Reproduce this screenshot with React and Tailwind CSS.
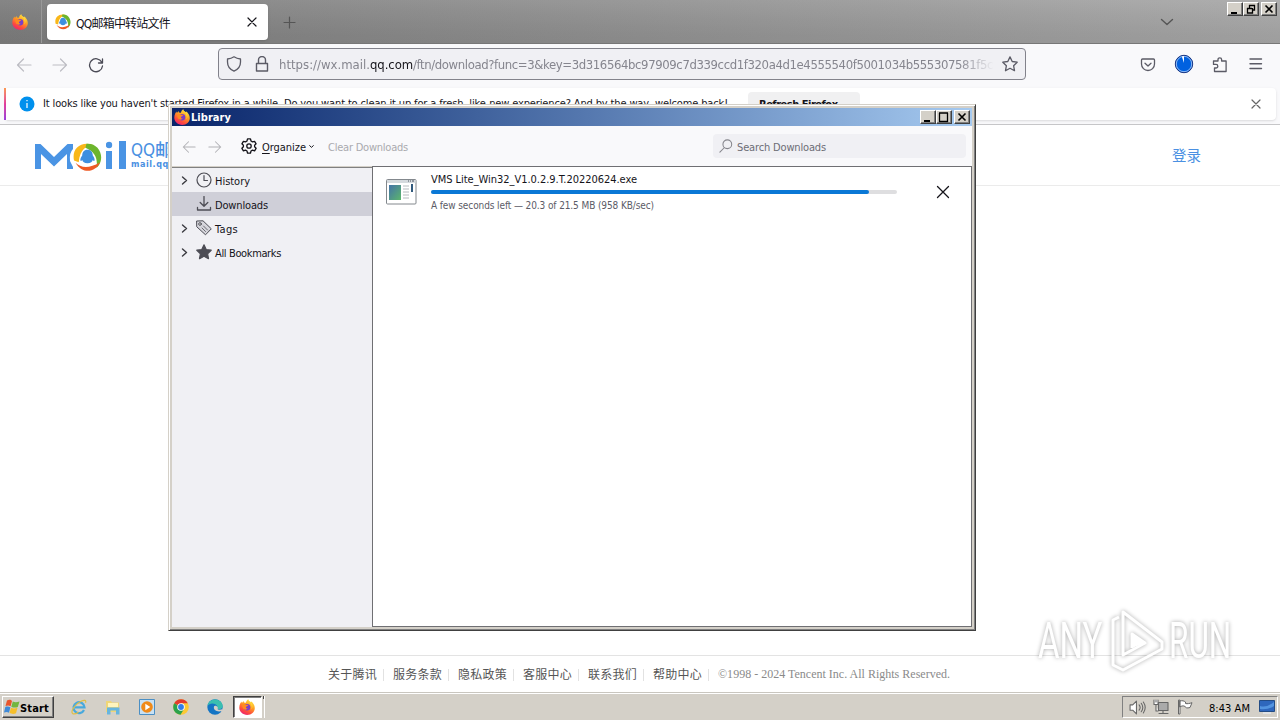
import { useLayoutEffect, useRef } from "react";

const UI = "font-['DejaVu_Sans_Condensed','Noto_Sans_CJK_SC',sans-serif]";

/* Text run whose tracking is adjusted so that it fills a given width. */
function Fit({ w, className = "", children }) {
  const ref = useRef(null);
  useLayoutEffect(() => {
    const el = ref.current;
    el.style.letterSpacing = "0px";
    const n = el.textContent.length;
    el.style.letterSpacing = `${(w - el.getBoundingClientRect().width) / n}px`;
  }, [w]);
  return (
    <span ref={ref} className={`inline-block shrink-0 whitespace-pre ${className}`}>
      {children}
    </span>
  );
}

function Icon({ className = "size-4", children, box = "0 0 16 16", sw = 1.2 }) {
  return (
    <svg viewBox={box} className={`shrink-0 ${className}`} fill="none" stroke="currentColor" strokeWidth={sw} strokeLinecap="round" strokeLinejoin="round">
      {children}
    </svg>
  );
}

function Firefox({ className }) {
  return (
    <svg viewBox="0 0 16 16" className={`shrink-0 ${className}`}>
      <defs>
        <linearGradient id="ffx" x1="0.8" y1="0" x2="0.25" y2="1">
          <stop offset="0" stopColor="#fff04a" />
          <stop offset="0.4" stopColor="#ffa022" />
          <stop offset="0.75" stopColor="#ff4a3d" />
          <stop offset="1" stopColor="#e8207a" />
        </linearGradient>
      </defs>
      <path fill="url(#ffx)" d="M1.2 4.5 2.4 2.4l.5 1.5L4.6 2l.3 1.6 2 .1C7.300 1.900 8.200.8 9.400.2c.1 1.500 1.200 2.200 2.300 3.200.4-.1.3-.8.2-1.200 2.300 1.500 3.900 4 3.900 6.700 0 4-3.300 7-7.600 7S.3 12.800.3 8.800c0-1.600.300-2.900.9-4.300z" />
      <circle cx="8" cy="8.200" r="3.300" fill="#7a3fc9" />
      <path fill="#ff8a20" d="M3 5.500c1.500-1 3-.7 4.300.300l1.900.2c-.3 1-1.500 1.300-2.200 1.900-.4.800.5 1.700 1.600 1.600-.6 1-2 1.500-3 1C4 10 3.200 8.200 3 5.500z" />
      <path fill="#ffd83a" d="M9.600 1.500c.2 1.900 3.200 3 3.200 6.300 0 1.100-.3 2-.8 2.800 2.500-2.400 1.500-6-.5-7.700-.7-.6-1.600-.9-1.900-1.400z" />
    </svg>
  );
}

function MailMark({ className }) {
  return (
    <svg viewBox="0 0 28 28" className={`shrink-0 ${className}`} fill="none">
      <path d="M1 17C-1 8 4 1 13.500.8c3 0 5 .7 6.500 1.700C13 2.500 7 5.500 5.500 18.500z" fill="#f9b719" />
      <path d="M13 .8C23 0 29 9 26.700 17.500c-.8 3-2 4.500-4 6.500C24 16 22 8.500 12 4.500z" fill="#6cb52d" />
      <path d="M26 18.500C22 28.500 9 30.500 2.500 19c5 5 13 6 23.500-.5z" fill="#ee5a24" />
      <path d="M14 6.500c3.600 0 5 2.500 5.100 5.500 1.200 1.400 2.100 3.600 1.700 5-.3.700-1.200-.1-1.700-.7-.4 1.800-2 3.200-5.100 3.200s-4.700-1.400-5.100-3.200c-.5.600-1.400 1.400-1.700.7-.4-1.400.5-3.600 1.700-5 .1-3 1.500-5.500 5.100-5.500z" fill="#3d8fe0" />
    </svg>
  );
}

const Back = ({ className }) => <Icon className={className}><path d="M15 8H1.500M7.500 2 1.500 8l6 6" /></Icon>;
const Forward = ({ className }) => <Icon className={className}><path d="M1 8h13.500M8.500 2l6 6-6 6" /></Icon>;
const Chevron = () => <Icon className="size-[9px]" box="0 0 9 9" sw={1.400}><path d="M2.500 1 6.500 4.500l-4 3.500" /></Icon>;

const BEVEL = "border border-t-white border-l-white border-b-[#404040] border-r-[#404040] bg-[#d4d0c8] shadow-[inset_-1px_-1px_#808080]";

function CaptionButton({ kind, className = "" }) {
  return (
    <div className={`flex h-[14px] w-4 items-center justify-center text-black ${BEVEL} ${className}`}>
      <svg viewBox="0 0 12 11" className="h-[11px] w-3" fill="none" stroke="currentColor">
        {kind === "min" && <path d="M2 9h6" strokeWidth="2" />}
        {kind === "max" && <path d="M1 1h9M1.500 1v8.500h8V1" strokeWidth="1.300" />}
        {kind === "restore" && <path d="M4 1.500h6M4.500 1v3M9.500 1v5H7M2 4.500h5M2.500 4v5h5V4" strokeWidth="1.300" />}
        {kind === "close" && <path d="m2.500 1.500 7 7m0-7-7 7" strokeWidth="1.600" />}
      </svg>
    </div>
  );
}

function TitleBar() {
  return (
    <header className="flex h-11 shrink-0 border-b border-[#777] bg-linear-to-r from-[#7f7f7f] via-[#949494] to-[#aaaaaa]">
      <div className="flex w-full bg-linear-to-b from-white/5 to-black/7">
        <div className="flex w-[42px] items-center border-r border-[#999] pl-3"><Firefox className="size-4" /></div>
        <div className="mt-1 ml-[5px] flex h-9 w-[221px] items-center rounded bg-white pl-2 text-[#15141a] shadow-sm">
          <MailMark className="size-4" />
          <Fit w={94} className="mt-[3px] ml-[5px] text-[12px]">QQ邮箱中转站文件</Fit>
          <Icon className="ml-[77px] size-[10px]" box="0 0 10 10"><path d="m1 1 8 8m0-8L1 9" /></Icon>
        </div>
        <Icon className="mt-[16px] ml-[15px] size-[13px] text-[#555]" box="0 0 13 13"><path d="M6.500 1v11M1 6.500h11" /></Icon>
        <Icon className="mt-[15px] ml-auto size-[14px] text-[#555]" box="0 0 14 14" sw={1.400}><path d="m1.500 4.500 5.500 5 5.500-5" /></Icon>
        <div className="mt-0.5 mr-[3px] ml-[53px] flex">
          <CaptionButton kind="min" />
          <CaptionButton kind="restore" />
          <CaptionButton kind="close" className="ml-[2px]" />
        </div>
      </div>
    </header>
  );
}

function NavBar() {
  return (
    <nav className="flex h-11 shrink-0 items-center bg-[#f9f9fb] pb-[3px] text-[#5b5b66]">
      <div className="ml-4 flex gap-5 text-[#bdbdc3]"><Back /><Forward /></div>
      <Icon className="ml-5 size-4 text-[#4a4a55]" sw={1.300}><path d="M13.800 5.200A6.500 6.500 0 1 0 14.500 9M14.500 2v4H10.500" /></Icon>
      <div className="-mt-px ml-[114px] flex h-8 w-[808px] items-center rounded border border-[#82828b] bg-[#f0f0f4] pl-[7px]">
        <Icon className="size-4" sw={1.300}><path d="M8 .8c2 1.400 4 2 6.500 2.200v3c0 4-2.500 7.500-6.500 9.200C4 13.500 1.500 10 1.500 6V3C4 2.800 6 2.200 8 .8z" /></Icon>
        <Icon className="ml-3 size-4" sw={1.400}><path d="M2.500 7.500h11v7.500h-11zM4.500 7.500V4a3.500 3.500 0 0 1 7 0v3.500" /></Icon>
        <div className="mt-0.5 ml-[9px] flex w-[715px] overflow-hidden text-[13px] text-[#85858e] mask-r-from-95%">
          <Fit w={91}>https://wx.mail.</Fit>
          <Fit w={43} className="text-[#15141a]">qq.com</Fit>
          <Fit w={580}>/ftn/download?func=3&amp;key=3d316564bc97909c7d339ccd1f320a4d1e4555540f5001034b555307581f5c</Fit>
        </div>
        <Icon className="ml-2 size-4" sw={1.300}><path d="m8 .9 2.200 4.600 5 .7-3.600 3.500.9 5L8 12.300l-4.500 2.400.9-5L.8 6.200l5-.7z" /></Icon>
      </div>
      <Icon className="ml-[114px] size-4" sw={1.300}><path d="M2.500 2h11q1 0 1 1v4a6.500 6.500 0 0 1-13 0V3q0-1 1-1zM5 6.200l3 2.800 3-2.800" /></Icon>
      <svg viewBox="0 0 20 20" className="-mt-px ml-[18px] size-5">
        <circle cx="10" cy="10" r="8.700" fill="#0061e0" stroke="#15307c" strokeWidth="1" />
        <circle cx="10" cy="10" r="7.700" fill="none" stroke="#cfe2ff" strokeWidth=".7" />
        <path d="M10 9 7.800 2.500Q9 2 10 2z" fill="#fff" />
      </svg>
      <Icon className="ml-[18px] size-4" sw={1.300}><path d="M2.500 14.500V11H4a1.800 1.800 0 0 0 0-3.600H1.500V4H6V2.600a1.800 1.800 0 0 1 3.600 0V4h4.500v10.500z" /></Icon>
      <Icon className="-mt-px ml-5 size-4" sw={1.400}><path d="M2 3h11.500M2 7.800h11.500M2 12.500h11.500" /></Icon>
    </nav>
  );
}

function Notification() {
  return (
    <div className="flex h-[37px] shrink-0 border-b border-[#c6c6c8] bg-[#f9f9fb] px-1 pb-1">
      <div className="w-[2px] bg-linear-to-b from-[#ff9a50] via-[#e83fa0] to-[#9f3fe0]" />
      <div className="flex min-w-0 flex-1 rounded-r bg-white pl-[13px] shadow-sm">
        <svg viewBox="0 0 16 16" className="mt-2 size-4 shrink-0">
          <circle cx="8" cy="8" r="7.500" fill="#0090ed" />
          <path d="M8 4v1.300M8 7v5" stroke="#fff" strokeWidth="1.200" />
        </svg>
        <Fit w={685} className="mt-2 ml-2 text-[11px] leading-4 text-[#15141a]">It looks like you haven't started Firefox in a while. Do you want to clean it up for a fresh, like-new experience? And by the way, welcome back!</Fit>
        <div className="mt-1 ml-5 h-7 w-28 rounded bg-[#f0f0f1] pt-[5px] pl-[11px] text-[11px] leading-4 font-bold text-[#15141a]"><Fit w={88}>Refresh Firefox…</Fit></div>
        <Icon className="mt-[11px] mr-[15px] ml-auto size-[10px] text-[#666]" box="0 0 10 10"><path d="m1 1 8 8m0-8L1 9" /></Icon>
      </div>
    </div>
  );
}

function MailPage() {
  const links = ["关于腾讯", "服务条款", "隐私政策", "客服中心", "联系我们", "帮助中心"];
  return (
    <main className="flex min-h-0 flex-1 flex-col bg-white">
      <div className="flex h-[61px] shrink-0 items-center border-b border-[#ebebeb] pl-[35px] text-[#4a90e2]">
        <svg viewBox="0 0 38 26" preserveAspectRatio="none" className="mt-[2px] h-[26px] w-[38px]" fill="#4a94e4"><path d="M0 26V1h5.500L19 14 32.500 1H38v5q-4 4-3 12l3 6v2h-6V11L19 23.500 6 11v15z" /></svg>
        <MailMark className="mt-1 size-[29px]" />
        <svg viewBox="0 0 20 28" className="ml-[4px] h-7 w-5" fill="#4a94e4"><path d="M0 10h6v18H0zM13 0h7v28h-7z" /><circle cx="3" cy="4" r="3.200" /></svg>
        <div className="ml-[5px] flex flex-col">
          <span className="text-[17px] leading-[18px] font-medium whitespace-nowrap">QQ邮箱</span>
          <Fit w={64} className="text-[9px] leading-[10px] font-bold">mail.qq.com</Fit>
        </div>
        <span className="mt-[3px] mr-[79px] ml-auto text-[14.500px]">登录</span>
      </div>
      <footer className="mt-auto flex h-[37px] shrink-0 items-center border-t border-[#e3e3e3] pt-px pl-[328px] text-[12px] text-[#555]">
        {links.map((t) => (
          <div key={t} className="flex w-[65px] shrink-0 items-center">
            <Fit w={49}>{t}</Fit>
            <span className="ml-1.5 h-3 w-px bg-[#e2e2e2]" />
          </div>
        ))}
        <Fit w={232} className="-mt-px font-['Liberation_Serif',serif] text-[12px] text-[#8a8a8a]">©1998 - 2024 Tencent Inc. All Rights Reserved.</Fit>
      </footer>
    </main>
  );
}

function TreeRow({ label, w, icon, open, selected }) {
  return (
    <div className={`flex h-6 items-center pl-2 ${selected ? "bg-[#cfcfd8]" : ""}`}>
      <span className="mt-px w-[9px] text-[#3a3a40]">{open && <Chevron />}</span>
      <span className="ml-[7px] flex text-[#4d4d55]">{icon}</span>
      <Fit w={w} className="mt-[4px] ml-[3px] leading-4">{label}</Fit>
    </div>
  );
}

function LibraryWindow() {
  return (
    <section className="absolute top-[104px] left-[168px] flex h-[527px] w-[808px] flex-col border border-t-[#d4d0c8] border-r-[#404040] border-b-[#404040] border-l-[#d4d0c8] bg-[#d4d0c8] p-[2px] pb-[3px] text-[11px] text-[#15141a] shadow-[inset_1px_1px_#fff,inset_-1px_-1px_#808080]">
      <div className="mx-px mt-px flex h-[18px] shrink-0 items-center bg-linear-to-r from-[#0a246a] to-[#a6caf0] pr-0.5 pl-0.5">
        <Firefox className="size-4" />
        <Fit w={40} className="mt-[2px] ml-px leading-4 font-bold text-white">Library</Fit>
        <div className="ml-auto flex"><CaptionButton kind="min" /><CaptionButton kind="max" /><CaptionButton kind="close" className="ml-[2px]" /></div>
      </div>
      <div className="mx-px flex h-10 shrink-0 items-center bg-[#f9f9fb] pl-[10px]">
        <div className="mt-px flex gap-3 text-[#b2b2b6]"><Back className="size-[14px]" /><Forward className="size-[14px]" /></div>
        <Icon className="ml-[19px] size-4 text-[#15141a]" sw={1.300}><circle cx="8" cy="8" r="2.200" /><path d="m6.500.9h3l.5 2.100 1.500.9 2.100-.6 1.500 2.500L13.600 7.200v1.600l1.500 1.500-1.500 2.500-2.100-.7-1.500.9-.5 2.100h-3L6 13l-1.500-.9-2.100.7-1.500-2.500L2.400 8.800V7.200L.9 5.800l1.500-2.500 2.100.6L6 3z" /></Icon>
        <Fit w={44} className="mt-[4px] ml-[5px] leading-4"><span className="underline underline-offset-2">O</span>rganize</Fit>
        <Icon className="ml-[3px] size-[5px]" box="0 0 6 6"><path d="m.8 2 2.200 2 2.200-2" /></Icon>
        <Fit w={80} className="mt-[4px] ml-[14px] leading-4 text-[#aaaaae]">Clear Downloads</Fit>
        <div className="mr-[6px] ml-auto flex h-[24px] w-[253px] items-center rounded bg-[#f0f0f4] pl-1.5 text-[#6d6d76]">
          <Icon className="size-[14px] text-[#85858c]"><circle cx="9.500" cy="6" r="5" /><path d="M6 10 1 15" /></Icon>
          <Fit w={89} className="mt-[4px] ml-1 leading-4">Search Downloads</Fit>
        </div>
      </div>
      <div className="mx-px flex min-h-0 flex-1">
        <aside className="mt-px w-[200px] border-t border-[#808080] bg-[#f0f0f4]">
          <TreeRow open label="History" w={35} icon={<Icon><circle cx="8" cy="8" r="7" /><path d="M8 3.500v5h3.500" /></Icon>} />
          <TreeRow selected label="Downloads" w={53} icon={<Icon sw={1.300}><path d="M8 .5V10M4.200 6.500 8 10.200l3.800-3.700M1.500 11.500v2.500h13v-2.500" /></Icon>} />
          <TreeRow open label="Tags" w={23} icon={<Icon sw={1}><path d="M1 1 7 .8l8.300 8-5.800 6L1 7z" fill="#d6d6dc" /><circle cx="4" cy="4" r="1.300" fill="#fff" /><path d="m7.500 6 4 4M6 8l3.500 3.500" strokeWidth=".8" /></Icon>} />
          <TreeRow open label="All Bookmarks" w={66} icon={<Icon><path fill="currentColor" d="m8 .8 2.200 4.700 5 .7-3.600 3.500.9 5L8 12.300l-4.500 2.400.9-5L.8 6.200l5-.7z" /></Icon>} />
        </aside>
        <div className="flex min-w-0 flex-1 items-start border border-[#6f6f73] bg-white pt-1 pl-[13px]">
          <svg viewBox="0 0 31 26" className="mt-2 h-[26px] w-[31px] shrink-0">
            <defs><linearGradient id="app" x2="1" y2="1"><stop stopColor="#4373a8" /><stop offset="1" stopColor="#5cb66c" /></linearGradient></defs>
            <rect x=".5" y=".5" width="29.500" height="24.500" rx="1" fill="#fff" stroke="#83888d" />
            <path d="M1 2.500h28.500" stroke="#d5dade" strokeWidth="3" />
            <path d="M22 2h1m1 0h1m1 0h2" stroke="#4d5560" />
            <rect x="3" y="6" width="12" height="15" fill="url(#app)" />
            <path d="M17 7h6m-6 3h6m-6 3h6m-6 3h6m-6 3h6" stroke="#b5babe" />
            <path d="M26 5v8" stroke="#315a7d" strokeWidth="2" />
          </svg>
          <div className="ml-[14px] flex flex-col items-start">
            <Fit w={206} className="mt-px leading-4">VMS Lite_Win32_V1.0.2.9.T.20220624.exe</Fit>
            <div className="mt-[2px] h-1 w-[466px] rounded-sm bg-[#dedee0]"><div className="h-1 w-[438px] rounded-sm bg-[#0a78d6]" /></div>
            <Fit w={223} className="mt-1 text-[10px] leading-4 text-[#5b5b66]">A few seconds left — 20.3 of 21.5 MB (958 KB/sec)</Fit>
          </div>
          <Icon className="mt-[14px] ml-[39px] size-[14px]" box="0 0 14 14" sw={1.300}><path d="m1.500 1.500 11 11m0-11-11 11" /></Icon>
        </div>
      </div>
    </section>
  );
}

function Watermark() {
  return (
    <div className="absolute top-[608px] left-[1038px] flex h-[64px] w-[196px] items-center text-[50px] leading-none text-white drop-shadow-[0_0_2px_rgba(0,0,0,0.34)] font-['Roboto',sans-serif]">
      <div className="w-[66px] pt-0.5"><span className="inline-block origin-left scale-x-[0.66]">ANY</span></div>
      <svg viewBox="0 0 60 64" className="h-16 w-[60px] shrink-0" fill="none" stroke="#fff" strokeWidth="3" strokeLinejoin="round">
        <path d="M15 9 9 12v45l10 5 39-21v-7L19 4v43l22-12-13-9v14" />
        <path d="M28 26v14l13-5z" fill="#fff" stroke="none" />
      </svg>
      <div className="ml-[5px] w-[65px] pt-0.5"><span className="inline-block origin-left scale-x-[0.63]">RUN</span></div>
    </div>
  );
}

function Taskbar() {
  return (
    <div className="flex h-7 shrink-0 items-center border-t border-[#c9c6bf] bg-[#d4d0c8] pt-px text-[11px] text-black shadow-[inset_0_1px_#fff]">
      <div className={`ml-0.5 flex h-[22px] w-[52px] items-center pl-px ${BEVEL}`}>
        <svg viewBox="0 0 16 16" className="-mt-px size-4 shrink-0">
          <path d="M3 1.500C5.500.3 7 1 8 2L6.600 7.300C5 6.200 3.500 6.300 1.500 7z" fill="#e9552c" />
          <path d="M8.800 2.500c2 1 4 .9 6.700 0L13.800 8c-2 .8-4.500.8-6.500-.3z" fill="#73b640" />
          <path d="M1.300 8c1.900-.8 3.500-.6 5.100.3L5 13.800C3.500 12.700 2 12.700 0 13.500z" fill="#3f8ad8" />
          <path d="M7 8.800c2 .9 4 .9 6.500 0L12 14.300c-2 .9-4.500.8-6.500-.2z" fill="#f6bf2b" />
        </svg>
        <Fit w={29} className="mt-[3px] leading-4 font-bold">Start</Fit>
      </div>
      <div className="ml-[17px] flex items-center gap-[18px]">
        <svg viewBox="0 0 16 16" className="size-4" fill="none">
          <path d="M13 11A5.500 5.500 0 1 1 13.500 8.300H4" stroke="#48a9dd" strokeWidth="2.200" />
          <path d="M1.500 14.500C-.5 12 4 5 10 2.200 13.500.7 15.500 1 14.500 3.800M1.500 14.500c1.500 1 4 0 6-1.300" stroke="#dfbe45" strokeWidth="1.200" />
        </svg>
        <svg viewBox="0 0 16 16" className="size-4"><path d="M1 2h5l1 1.500h7V13H1z" fill="#efd678" /><path d="M3 4h10v4H3z" fill="#fff4bd" /><path d="M2 15.500V8.500h12.500v7H11v-4H5.500v4z" fill="#67b5df" /></svg>
        <svg viewBox="0 0 16 16" className="size-4"><path d="M.5.500h15v15H.5z" fill="#c8e1f4" stroke="#4b8fc4" /><circle cx="8" cy="8" r="5.800" fill="#f08a19" /><path d="m6.300 4.800 5 3.200-5 3.200z" fill="#fff" /></svg>
        <svg viewBox="0 0 16 16" className="size-4"><circle cx="8" cy="8" r="7.800" fill="#fcc934" /><path d="M8 8 1.200 4.200A7.800 7.800 0 0 1 14.800 4.200H8z" fill="#e33b2e" /><path d="M1.200 4.200A7.800 7.800 0 0 0 7.500 15.800L11 10z" fill="#2ba24c" /><circle cx="8" cy="8" r="3.800" fill="#fff" /><circle cx="8" cy="8" r="2.900" fill="#327ee9" /></svg>
        <svg viewBox="0 0 16 16" className="size-4"><circle cx="8" cy="8" r="7.700" fill="#1475c4" /><path d="M.5 7C1.500-2 15-1.500 15.700 7c.2 2.500-2 3.500-5 3C9.500 9.500 11 9 10 6.800 8 3.500 2 4 .5 7z" fill="#3abfb0" /><path d="M7 7.500c-1 3.500 3 6 8 4.500l.7-2c-2 1-4.700 1-5.200 0 .8-1 .3-2.300-.8-2.800S7.300 6.500 7 7.500z" fill="#d4d0c8" /></svg>
      </div>
      <div className="ml-2.5 flex h-[22px] w-[29px] items-center justify-center border border-t-[#404040] border-r-white border-b-white border-l-[#404040] bg-white shadow-[inset_1px_1px_#808080]"><Firefox className="-ml-px size-4" /></div>
      <div className="flex h-[22px] w-[3px] flex-col border-r border-white pl-px"><span className="h-[3px] w-px bg-[#404040]" /></div>
      <div className="mr-0.5 ml-auto flex h-[22px] w-[156px] items-center border border-t-[#808080] border-r-white border-b-white border-l-[#808080] pl-1.5 text-[#666]">
        <Icon className="size-[17px]" sw={1}><path d="M1 5.500h2.500L7 2v12l-3.500-3.500H1z" fill="#fff" /><path d="M9.500 5.500q2 2.500 0 5M11.500 4q3 4 0 8M13.500 2.800q3.500 5.200 0 10.400" /></Icon>
        <Icon className="ml-[7px] size-4" sw={1.100}><path d="M5.500 3.500h9.500v8H5.500zM6 14.500h9M10 12v2" fill="#aaa" /><path d="M1 1v4.500h4V1M3 1v2M3 5.500V12h2" fill="#fff" /></Icon>
        <Icon className="ml-2 size-4" sw={1}><path d="M1.500 1.500v13.500h1.500V1.500zM3 2c2.500-.8 4 0 5.500 1v1.500c2 .5 4 0 6.500-.8L13 8.500c-3 1-4.500.3-5.500-1.500C5.500 6.700 4.500 7 3 7.800z" fill="#fff" /></Icon>
        <Fit w={41} className="mt-[3px] ml-4 leading-4 text-black">8:43 AM</Fit>
        <svg viewBox="0 0 16 14" className="ml-[9px] h-[14px] w-4"><path d="M.5.500h15v11H.5z" fill="#2e67bd" stroke="#234c85" /><path d="M1 6Q8 8 15 2v4q-6 4-14 3z" fill="#5394e0" /><path d="M4 13h8" stroke="#e5e9ee" strokeWidth="1.500" /></svg>
      </div>
    </div>
  );
}

export default function App() {
  return (
    <div className={`relative flex h-[720px] w-[1280px] flex-col overflow-hidden bg-white ${UI}`}>
      <TitleBar />
      <NavBar />
      <Notification />
      <MailPage />
      <Taskbar />
      <LibraryWindow />
      <Watermark />
    </div>
  );
}
